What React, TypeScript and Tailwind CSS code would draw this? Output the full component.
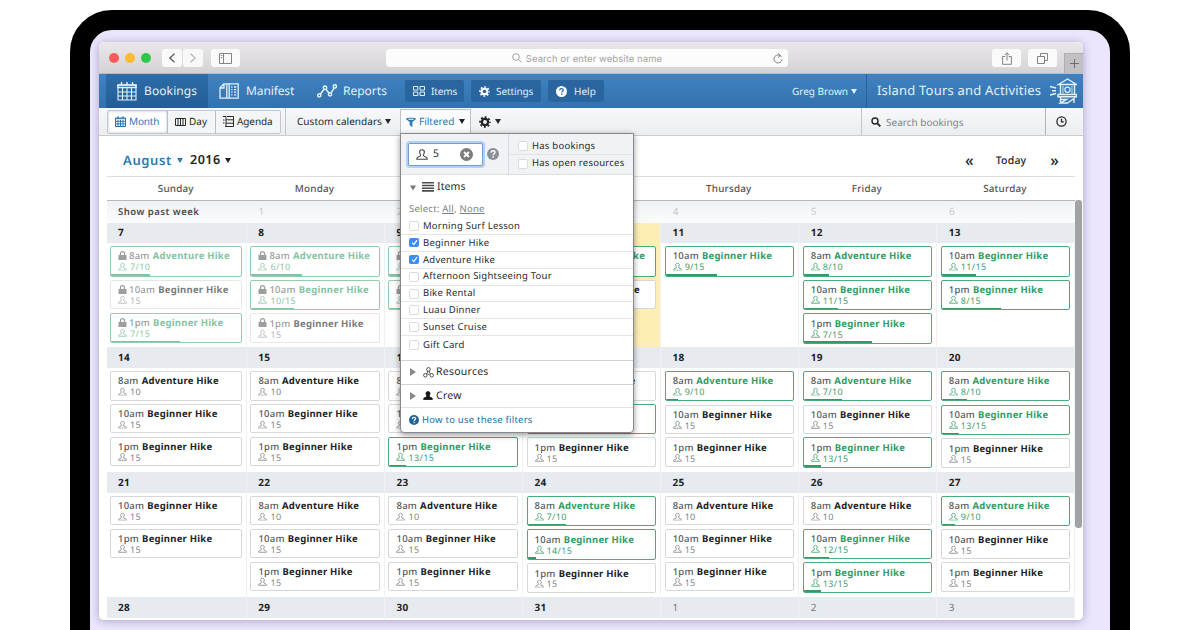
import React from 'react';

type Booking = {
  time: string;
  name: string;
  cap: number;
  booked?: number;
  locked?: boolean;
};

type Day = {
  day: number;
  bookings: Booking[];
  past?: boolean;
  today?: boolean;
  other?: boolean;
};

const A = 'Adventure Hike';
const B = 'Beginner Hike';

// Small helper so the weeks below stay readable
const b = (time: string, name: string, booked?: number, locked?: boolean): Booking => ({
  time,
  name,
  booked,
  locked,
  cap: name === A ? 10 : 15,
});

const weeks: Day[][] = [
  [
    { day: 7, past: true, bookings: [b('8am', A, 7, true), b('10am', B, undefined, true), b('1pm', B, 7, true)] },
    { day: 8, past: true, bookings: [b('8am', A, 6, true), b('10am', B, 10, true), b('1pm', B, undefined, true)] },
    { day: 9, past: true, bookings: [b('8am', A, 8, true), b('10am', B, 9, true)] },
    { day: 10, today: true, bookings: [b('10am', B, 9, true), b('1pm', B, undefined, true)] },
    { day: 11, bookings: [b('10am', B, 9)] },
    { day: 12, bookings: [b('8am', A, 8), b('10am', B, 11), b('1pm', B, 7)] },
    { day: 13, bookings: [b('10am', B, 11), b('1pm', B, 8)] },
  ],
  [
    { day: 14, bookings: [b('8am', A), b('10am', B), b('1pm', B)] },
    { day: 15, bookings: [b('8am', A), b('10am', B), b('1pm', B)] },
    { day: 16, bookings: [b('8am', A), b('10am', B), b('1pm', B, 13)] },
    { day: 17, bookings: [b('8am', A), b('10am', B, 12), b('1pm', B)] },
    { day: 18, bookings: [b('8am', A, 9), b('10am', B), b('1pm', B)] },
    { day: 19, bookings: [b('8am', A, 7), b('10am', B), b('1pm', B, 13)] },
    { day: 20, bookings: [b('8am', A, 8), b('10am', B, 13), b('1pm', B)] },
  ],
  [
    { day: 21, bookings: [b('10am', B), b('1pm', B)] },
    { day: 22, bookings: [b('8am', A), b('10am', B), b('1pm', B)] },
    { day: 23, bookings: [b('8am', A), b('10am', B), b('1pm', B)] },
    { day: 24, bookings: [b('8am', A, 7), b('10am', B, 14), b('1pm', B)] },
    { day: 25, bookings: [b('8am', A), b('10am', B), b('1pm', B)] },
    { day: 26, bookings: [b('8am', A), b('10am', B, 12), b('1pm', B, 13)] },
    { day: 27, bookings: [b('8am', A, 9), b('10am', B), b('1pm', B)] },
  ],
  [
    { day: 28, bookings: [] },
    { day: 29, bookings: [] },
    { day: 30, bookings: [] },
    { day: 31, bookings: [] },
    { day: 1, other: true, bookings: [] },
    { day: 2, other: true, bookings: [] },
    { day: 3, other: true, bookings: [] },
  ],
];

const dayNames = ['Sunday', 'Monday', 'Tuesday', 'Wednesday', 'Thursday', 'Friday', 'Saturday'];

const filterItems = [
  { name: 'Morning Surf Lesson', checked: false },
  { name: 'Beginner Hike', checked: true },
  { name: 'Adventure Hike', checked: true },
  { name: 'Afternoon Sightseeing Tour', checked: false },
  { name: 'Bike Rental', checked: false },
  { name: 'Luau Dinner', checked: false },
  { name: 'Sunset Cruise', checked: false },
  { name: 'Gift Card', checked: false },
];

const PersonIcon = ({ className = '', filled = false }: { className?: string; filled?: boolean }) => (
  <svg viewBox="0 0 10 9" className={className} fill={filled ? 'currentColor' : 'none'} stroke="currentColor" strokeWidth="0.9" strokeLinejoin="round">
    <path d="M5 .6C3.800.6 3 1.400 3 2.500c0 1 .8 1.600.8 2.600 0 .8-.6 1.100-1.600 1.300C1.100 6.700.6 7.200.6 8.400h8.800c0-1.200-.5-1.700-1.600-2-1-.2-1.600-.5-1.600-1.300 0-1 .8-1.600.8-2.600C7 1.400 6.200.6 5 .6z" />
  </svg>
);

const LockIcon = () => (
  <svg viewBox="0 0 9 9" className="mr-[2px] h-[9px] w-[9px] shrink-0 -translate-y-px text-[#5b5e60]">
    <path d="M2.500 4.500V2.700a2 2 0 0 1 4 0v1.800" fill="none" stroke="currentColor" strokeWidth="1.300" />
    <rect x=".5" y="4" width="8" height="5" rx=".6" fill="currentColor" />
  </svg>
);

const Caret = ({ className = '' }: { className?: string }) => (
  <svg viewBox="0 0 6 5" className={`h-[5px] w-[6px] shrink-0 ${className}`} fill="currentColor">
    <path d="M0 0h6L3 5z" />
  </svg>
);

const GearIcon = ({ className = '' }: { className?: string }) => (
  <svg viewBox="0 0 12 12" className={className} fill="none" stroke="currentColor">
    <circle cx="6" cy="6" r="3.100" strokeWidth="2.200" />
    <circle cx="6" cy="6" r="4.900" strokeWidth="1.800" strokeDasharray="1.950 1.900" strokeDashoffset="0.970" />
  </svg>
);

const HelpIcon = ({ className = '', mark = '#fff' }: { className?: string; mark?: string }) => (
  <svg viewBox="0 0 12 12" className={className}>
    <circle cx="6" cy="6" r="6" fill="currentColor" />
    <path d="M4.100 4.700C4.100 3.500 4.900 2.800 6 2.800s2 .7 2 1.700C8 5.800 6.200 5.700 6.200 7.200" fill="none" stroke={mark} strokeWidth="1.400" />
    <rect x="5.400" y="8.200" width="1.500" height="1.500" fill={mark} />
  </svg>
);

const Checkbox = ({ checked }: { checked: boolean }) =>
  checked ? (
    <span className="flex h-[9px] w-[10px] shrink-0 items-center justify-center rounded-[2px] bg-[#3a8df5]">
      <svg viewBox="0 0 8 8" className="h-[7px] w-[7px]" fill="none" stroke="#fff" strokeWidth="1.300">
        <path d="M1.300 4.200l2 2.200L6.800 1.300" />
      </svg>
    </span>
  ) : (
    <span className="h-[10px] w-[10px] shrink-0 rounded-[2px] border border-[#d9dbdd] bg-white" />
  );

const TitleBar = () => (
  <div className="flex h-8 shrink-0 items-center border-b border-[#bdb9bf] bg-gradient-to-b from-[#ebe8ec] to-[#d5d2d6] pl-[10px] pt-px text-[#77777a]">
    <div className="flex gap-[6px]">
      <span className="h-[10px] w-[10px] rounded-full bg-[#f85c58]" />
      <span className="h-[10px] w-[10px] rounded-full bg-[#fcbb34]" />
      <span className="h-[10px] w-[10px] rounded-full bg-[#2ec74a]" />
    </div>
    <div className="ml-[11px] flex gap-px">
      <span className="flex h-[18px] w-5 items-center justify-center rounded-[3px] bg-[#fafafa]">
        <svg viewBox="0 0 8 10" className="h-[10px] w-2" fill="none" stroke="#555" strokeWidth="1.200"><path d="M6.500.7L1.800 5l4.700 4.300" /></svg>
      </span>
      <span className="flex h-[18px] w-5 items-center justify-center rounded-[3px] bg-[#f8f8f8]">
        <svg viewBox="0 0 8 10" className="h-[10px] w-2" fill="none" stroke="#b5b5b5" strokeWidth="1.200"><path d="M1.500.7L6.200 5 1.500 9.300" /></svg>
      </span>
    </div>
    <span className="ml-2 flex h-[18px] w-[29px] items-center justify-center rounded-[3px] bg-[#fafafa]">
      <svg viewBox="0 0 13 11" className="h-[11px] w-[13px]" fill="none" stroke="currentColor"><path d="M.5.5h12v10H.5zM4.500.5v10M1.800 2.500h1.500M1.800 4.500h1.500" strokeWidth=".9" /></svg>
    </span>
    <div className="relative ml-[146px] flex h-[18px] w-[402px] items-center justify-center rounded-[4px] bg-[#fcfcfc] text-[#a3a3a5]">
      <svg viewBox="0 0 10 10" className="mr-1 h-[10px] w-[10px]" fill="none" stroke="currentColor"><circle cx="4" cy="4" r="3.300" /><path d="M6.500 6.500l3 3" /></svg>
      <span className="pt-[3px] font-['Inter',sans-serif] text-[9.500px] leading-none tracking-[0.07px]">Search or enter website name</span>
      <svg viewBox="0 0 10 11" className="absolute right-[5px] h-[11px] w-[10px]" fill="none" stroke="#777"><path d="M8.500 4A4 4 0 1 0 9 6.200M5 .3l2.500 2.200L5 4.500" strokeWidth=".9" /></svg>
    </div>
    <span className="ml-[204px] flex h-[18px] w-[29px] items-center justify-center rounded-[3px] bg-[#fafafa]">
      <svg viewBox="0 0 10 13" className="h-[13px] w-[10px]" fill="none" stroke="currentColor" strokeWidth=".9"><path d="M3.200 4.500H.6v7.800h8.800V4.500H6.800M5 8.500V1M2.800 3L5 .8 7.200 3" /></svg>
    </span>
    <span className="ml-[7px] flex h-[18px] w-[29px] items-center justify-center rounded-[3px] bg-[#fafafa]">
      <svg viewBox="0 0 11 11" className="h-[11px] w-[11px]" fill="none" stroke="currentColor" strokeWidth=".9"><path d="M.5 3.500h7v7h-7zM3.500 3.500v-3h7v7h-3" /></svg>
    </span>
    <span className="ml-[7px] flex h-5 w-[19px] items-center justify-center self-end border-l border-t border-[#b0adb2] bg-[#c3c0c4]">
      <svg viewBox="0 0 10 10" className="h-[9px] w-[9px]" stroke="#666"><path d="M5 0v10M0 5h10" /></svg>
    </span>
  </div>
);

const NavBar = () => (
  <div className="flex h-[34px] shrink-0 items-center bg-gradient-to-b from-[#3f82c3] to-[#3272ad] pl-[7px] text-[#e4f0f9]">
    <div className="flex h-full w-[102px] items-center bg-gradient-to-b from-[#2c6da9] to-[#235d94] pl-[11px]">
      <svg viewBox="0 0 20 20" className="h-5 w-5 shrink-0" fill="none" stroke="currentColor">
        <path d="M1 4h18v15H1zM1 11h18M1 15h18M5.500 7v12M10 7v12M14.500 7v12" strokeWidth="1.100" />
        <path d="M1 4h18v2.500H1zM4.500 1v3M10 1v3M15.500 1v3" strokeWidth="1.400" />
      </svg>
      <span className="ml-[7px] text-[12px] tracking-[0.1px]">Bookings</span>
    </div>
    <div className="flex h-full items-center pl-[11px]">
      <svg viewBox="0 0 20 16" className="h-4 w-5 shrink-0" fill="none" stroke="currentColor" strokeWidth="1.300">
        <path d="M10.200 .8H4.800L1 4.800v10.400h9.200M10.200.8h9v14.400h-9zM1 5h4V1M7.800 1v14M12.200 4h1.300M12.200 6.600h1.300M12.200 9.200h1.300M12.200 11.800h1.300M15 4H17.300M15 6.600H17.300M15 9.200H17.300M15 11.800H17.300" />
      </svg>
      <span className="ml-[7px] w-[49px] text-[12px] tracking-[-0.12px]">Manifest</span>
    </div>
    <div className="flex h-full items-center pl-[22px]">
      <svg viewBox="0 0 20 14" className="h-[14px] w-5 shrink-0" fill="none" stroke="currentColor" strokeWidth="1.500">
        <path d="M3.300 10.200L7 5.200M9 5.200l3 4M14 8.800l3.300-5" />
        <circle cx="2.300" cy="11.300" r="1.600" /><circle cx="8" cy="3.700" r="1.700" /><circle cx="13" cy="10.300" r="1.600" /><circle cx="17.800" cy="2.400" r="1.600" />
      </svg>
      <span className="ml-[6px] w-[45px] text-[12px]">Reports</span>
    </div>
    <div className="ml-[17px] flex gap-[7px] text-[10px]">
      <span className="flex h-[22px] w-[59px] items-center rounded-[2px] bg-[#2966a0] pl-2">
        <svg viewBox="0 0 12 10" className="mr-[6px] h-[10px] w-3" fill="none" stroke="currentColor"><path d="M.5.5h4.300v3.600H.5zM7 .5h4.500v3.600H7zM.5 6h4.300v3.500H.5zM7 6h4.500v3.500H7z" /></svg>
        <span className="tracking-[-0.1px]">Items</span>
      </span>
      <span className="flex h-[22px] w-[70px] items-center rounded-[2px] bg-[#2966a0] pl-2">
        <GearIcon className="mr-[6px] h-[11px] w-[11px] text-white" />
        <span className="tracking-[-0.1px]">Settings</span>
      </span>
      <span className="flex h-[22px] w-[56px] items-center rounded-[2px] bg-[#2966a0] pl-2">
        <HelpIcon className="mr-[7px] h-[11px] w-[11px] text-white" mark="#2966a0" />
        Help
      </span>
    </div>
    <div className="ml-auto flex h-full w-[75px] items-center text-[10px]">
      <span className="w-[60px] whitespace-nowrap pl-px">Greg Brown</span>
      <Caret />
    </div>
    <div className="flex h-full w-[217px] items-center border-l border-[#2a6297] pl-[10px]">
      <span className="w-[172px] whitespace-nowrap text-[13px] tracking-[0.2px]">Island Tours and Activities</span>
      <svg viewBox="0 0 28 26" className="h-[26px] w-7 shrink-0" fill="none" stroke="currentColor" strokeWidth="1.400">
        <path d="M1 8.500l6 1.500M3 12.700h4M1 17l6-1.500M9.500 6.500L18.500 1l9 5.500zM11.500 7v9M25.500 7v9M9 16.500h18.500v2.200H9zM11.500 19v6M11.500 21.500h6L11.500 25h7l6.500-4.500V25" />
        <path d="M14 8v8M23 8v8" strokeWidth=".8" />
        <circle cx="18.500" cy="11.700" r="2.600" strokeWidth="1.200" />
      </svg>
    </div>
  </div>
);

const FilterMenu = () => (
  <div className="absolute -left-px top-[23px] z-10 flex h-[300px] w-[234px] flex-col rounded-b-[4px] border border-[#85898e] bg-white text-[9.500px] tracking-[0.24px] text-[#27292b] shadow-[0_2px_6px_rgba(0,0,0,0.4)]">
    <div className="flex h-[41px] shrink-0 border-b border-[#dcdfe3] bg-[#f0f2f5]">
      <div className="flex w-[108px] items-center border-r border-[#d6d9dd] pl-[7px]">
        <div className="flex h-[23px] w-[75px] shrink-0 items-center rounded-[2px] border border-[#6f9fd0] bg-white pl-[7px] shadow-[0_0_0_2px_#b4d1ee]">
          <PersonIcon className="h-[11px] w-3 text-[#444]" />
          <span className="ml-[5px] w-[27px] pt-[2px] text-[10.500px]">5</span>
          <svg viewBox="0 0 12 12" className="h-[13px] w-[13px] shrink-0"><circle cx="6" cy="6" r="6" fill="#7a7c7e" /><path d="M3.700 3.700l4.600 4.600M8.300 3.700L3.700 8.300" stroke="#fff" strokeWidth="1.700" /></svg>
        </div>
        <HelpIcon className="ml-1 h-3 w-3 shrink-0 text-[#8b8f97]" />
      </div>
      <div className="flex flex-1 flex-col pt-[4px]">
        <div className="flex h-[17px] items-center gap-[4px] border-b border-[#e1e4e7] pl-[9px]"><Checkbox checked={false} />Has bookings</div>
        <div className="flex h-[17px] items-center gap-[4px] whitespace-nowrap pl-[9px]"><Checkbox checked={false} />Has open resources</div>
      </div>
    </div>
    <div className="flex h-[26px] shrink-0 items-center pl-[9px] text-[10.500px] tracking-[0.1px]">
      <Caret className="mr-[6px] h-[6px] w-2 text-[#75787b]" />
      <svg viewBox="0 0 12 10" className="mr-[3px] h-[10px] w-3 -translate-y-px" fill="#4a4d50"><path d="M0 0h12v1.600H0zM0 2.700h12v1.600H0zM0 5.400h12V7H0zM0 8.100h12v1.600H0z" /></svg>
      Items
    </div>
    <div className="flex h-[17px] shrink-0 items-center pl-2 text-[#7b7e81]">
      <span>Select: <u>All</u>, <u>None</u></span>
    </div>
    {filterItems.map((item, i) => (
      <div key={item.name} className={`flex h-[16.900px] shrink-0 items-center gap-[4px] whitespace-nowrap pl-2 ${i < 7 ? 'border-b border-[#e4e6e8]' : ''}`}>
        <Checkbox checked={item.checked} />
        {item.name}
      </div>
    ))}
    <div className="mt-[7px] flex h-[24px] shrink-0 items-center border-t border-[#d0d3d6] pl-[9px] pt-px text-[10.500px]">
      <svg viewBox="0 0 6 8" className="mr-[7px] h-2 w-[6px] -translate-y-px" fill="#85888b"><path d="M0 0l6 4-6 4z" /></svg>
      <svg viewBox="0 0 12 12" className="mr-[2px] h-[11px] w-[11px] -translate-y-px" fill="none" stroke="#444"><circle cx="6" cy="2.600" r="2" /><circle cx="2.500" cy="9" r="1.900" /><circle cx="9.500" cy="9" r="1.900" /><path d="M5 4.500v2L3.500 7.500M7 4.500v2l1.500 1M5 8h2" /></svg>
      Resources
    </div>
    <div className="flex h-[23px] shrink-0 items-center border-t border-[#d0d3d6] pl-[9px] pt-px text-[10.500px]">
      <svg viewBox="0 0 6 8" className="mr-[7px] h-2 w-[6px] -translate-y-px" fill="#85888b"><path d="M0 0l6 4-6 4z" /></svg>
      <PersonIcon filled className="mr-[3px] h-[9px] w-[10px] -translate-y-px text-[#151515]" />
      Crew
    </div>
    <div className="flex flex-1 items-center gap-[3px] border-t border-[#e0e3e6] pl-2 text-[#246ba3]">
      <HelpIcon className="h-[10px] w-[10px] text-[#20639b]" />
      How to use these filters
    </div>
  </div>
);

const Toolbar = () => (
  <div className="flex h-7 shrink-0 items-center border-b border-[#c9ccd0] bg-gradient-to-b from-[#f7f8f9] to-[#ebedef] pl-2 text-[10px] text-[#26282a]">
    <div className="flex h-6 items-center rounded-[2px] border border-[#c2c7cc] bg-[#f4f5f7]">
      <span className="flex h-full w-[59px] items-center bg-white pl-[7px] text-[#2a78b1] shadow-[inset_0_0_3px_#b9c4ce]">
        <svg viewBox="0 0 11 11" className="mr-[3px] h-[11px] w-[11px]" fill="none" stroke="currentColor"><path d="M.5 2h10v8.500H.5zM.5 2.700h10M.5 5.300h10M.5 7.800h10M3 4v6.500M5.500 4v6.500M8 4v6.500M3 0v2M8 0v2" /></svg>
        <span className="tracking-[-0.15px]">Month</span>
      </span>
      <span className="flex h-full w-[48px] items-center border-l border-[#b9bec3] pl-[7px]">
        <svg viewBox="0 0 11 8" className="mr-[3px] h-2 w-[11px]" fill="none" stroke="currentColor"><path d="M.5.500h10v7H.5zM3 .5v7M5.500.5v7M8 .5v7" /></svg>
        Day
      </span>
      <span className="flex h-full w-[65px] items-center border-l border-[#b9bec3] pl-[7px]">
        <svg viewBox="0 0 11 11" className="mr-[3px] h-[11px] w-[11px]" fill="none" stroke="currentColor"><path d="M0 .5h3v10M4 .5h6.500v10H2M3 3.800h7.500M3 7.200h7.500M0 4h1.500M0 7h1.500" /></svg>
        <span className="tracking-[-0.1px]">Agenda</span>
      </span>
    </div>
    <div className="ml-[4px] flex h-full w-[115px] items-center border-l border-[#c0c5ca] pl-[11px]">
      <span className="w-[88px] whitespace-nowrap tracking-[0.03px]">Custom calendars</span>
      <Caret />
    </div>
    <div className="relative mt-px flex h-6 w-[71px] items-center self-start border border-b-0 border-[#bcc1c6] bg-[#fbfcfd] pl-[5px] text-[#2a78b1]">
      <svg viewBox="0 0 10 10" className="mr-[3px] h-[10px] w-[10px]" fill="currentColor"><path d="M0 1.500C0 .4 10 .4 10 1.500 10 2.500 6.400 4.500 6.400 5.500V10L3.700 8.200V5.500C3.700 4.500 0 2.500 0 1.500z" /><path d="M1.500 1.700h7L7 2.700H3z" fill="#fff" /></svg>
      <span className="w-[40px]">Filtered</span>
      <Caret className="text-[#222]" />
      <FilterMenu />
    </div>
    <GearIcon className="ml-[8px] mr-[4px] h-3 w-3 text-[#222]" />
    <Caret />
    <div className="ml-auto flex h-full w-[184px] items-center border-l border-[#c0c5ca] pl-[9px] text-[#818487]">
      <svg viewBox="0 0 10 10" className="mr-[5px] h-[10px] w-[10px]" fill="none" stroke="#26282a"><circle cx="4" cy="4" r="3" strokeWidth="1.400" /><path d="M6.200 6.200l3.200 3.200" strokeWidth="1.900" /></svg>
      <span className="pt-px">Search bookings</span>
    </div>
    <div className="flex h-full w-[38px] items-center border-l border-[#b0b5ba] pl-[10px]">
      <svg viewBox="0 0 12 12" className="h-[11px] w-[11px]" fill="none" stroke="#26282a" strokeWidth="1.400"><circle cx="6" cy="6" r="5" /><path d="M6 3v3.300h2.500" /></svg>
    </div>
  </div>
);

const BookingCard = ({ booking, past }: { booking: Booking; past?: boolean }) => {
  const isBooked = booking.booked !== undefined;
  const left = isBooked ? ((booking.cap - (booking.booked as number)) / booking.cap) * 100 : 0;

  return (
    <div
      className={`relative overflow-hidden rounded-[2px] border bg-white pl-[7px] pt-[3px] ${past ? 'opacity-60' : ''} ${
        isBooked ? 'h-[30.500px] border-[#4aac7a]' : 'h-[29.700px] border-[#d5d8db]'
      }`}
    >
      <div className="flex h-[13px] items-center whitespace-nowrap text-[9.500px]">
        {booking.locked && <LockIcon />}
        <span className="mr-[3px] font-medium tracking-[0.25px] text-[#55585a]">{booking.time}</span>
        <span className={`font-bold tracking-[0.23px] ${isBooked ? 'text-[#2f9c65]' : 'text-[#202325]'}`}>{booking.name}</span>
      </div>
      <div className={`-mt-px flex h-[10px] items-center text-[9px] tracking-[0.35px] ${isBooked ? 'text-[#3f9d6c]' : 'text-[#808386]'}`}>
        <PersonIcon className="mr-[3px] h-[8.500px] w-[9px] -translate-y-[0.500px]" />
        {isBooked ? `${booking.booked}/${booking.cap}` : booking.cap}
      </div>
      {isBooked && <div className="absolute bottom-0 left-0 h-[1.500px] bg-[#2f9c65]" style={{ width: `${left}%` }} />}
    </div>
  );
};

const Calendar = () => (
  <div className="flex min-h-0 flex-1 bg-white pl-2">
    <div className="w-[968px] shrink-0">
      <div className="flex h-[41px] items-center border-b border-[#dcdee1] pl-4 pt-[9px] font-semibold text-[#202325]">
        <span className="w-[54px] text-[13px] tracking-[0.65px] text-[#2a7cb5]">August</span>
        <Caret className="text-[#2a7cb5]" />
        <span className="ml-[7px] w-[35px] text-[12.500px] tracking-[0.5px]">2016</span>
        <Caret />
        <div className="ml-auto flex items-center pr-[16px] font-medium">
          <span className="-translate-y-px text-[16px] leading-none">«</span>
          <span className="ml-[22px] mr-[24px] translate-y-px text-[10.500px] tracking-[0.2px]">Today</span>
          <span className="-translate-y-px text-[16px] leading-none">»</span>
        </div>
      </div>
      <div className="grid h-[24px] grid-cols-[139.500px_repeat(6,1fr)] items-center border-b border-[#b5b8bb] text-center text-[9.900px] font-medium tracking-[0.2px] text-[#515456]">
        {dayNames.map((name) => (
          <span key={name} className="pr-[2px]">{name}</span>
        ))}
      </div>
      <div className="grid h-[21.500px] grid-cols-[139.500px_repeat(6,1fr)] items-center bg-gradient-to-b from-[#f1f2f4] to-[#fbfcfd] text-[10px] text-[#c8cacc]">
        <span className="pl-[11px] text-[9.500px] font-semibold tracking-[0.5px] text-[#484b4d]">Show past week</span>
        {[1, 2, 3, 4, 5, 6].map((n) => (
          <span key={n} className="pl-[12px]">{n}</span>
        ))}
      </div>
      {weeks.map((week, i) => (
        <div key={i} className="grid h-[124.900px] grid-cols-[139.500px_repeat(6,1fr)]">
          {week.map((d, j) => (
            <div key={j} className={`border-r border-[#eff1f3] ${d.today ? 'bg-[#feeeb5]' : ''}`}>
              <div className={`flex h-[20.500px] items-center text-[10px] tracking-[0.3px] ${j === 0 ? 'pl-[11px]' : 'pl-[11.800px]'} ${d.today ? '' : 'bg-[#e7eaee]'} ${d.other ? 'text-[#75787a]' : 'font-bold text-[#202325]'}`}>
                {d.day}
              </div>
              <div className={`flex flex-col gap-[3.200px] pr-[3.500px] pt-[3px] ${j === 0 ? 'pl-[3px]' : 'pl-[3.900px]'}`}>
                {d.bookings.map((booking, k) => (
                  <BookingCard key={k} booking={booking} past={d.past} />
                ))}
              </div>
            </div>
          ))}
        </div>
      ))}
    </div>
    <div className="flex-1 pt-16">
      <div className="h-[328px] w-[7px] rounded-[3px] bg-[#a0a2a4]" />
    </div>
  </div>
);

const App: React.FC = () => {
  return (
    <div className="flex h-[630px] w-[1200px] justify-center overflow-hidden bg-white pt-[10px] font-['Noto_Sans',sans-serif] [text-rendering:geometricPrecision]">
      <div className="h-[700px] w-[1060px] shrink-0 rounded-[42px] border-[20px] border-black bg-[#ebe6fe] pl-[9px] pt-3">
        <div className="flex h-[578px] w-[984px] flex-col overflow-hidden rounded-[5px] bg-white shadow-[0_1px_8px_rgba(40,30,80,0.35)]">
          <TitleBar />
          <NavBar />
          <Toolbar />
          <Calendar />
        </div>
      </div>
    </div>
  );
};

export default App;
